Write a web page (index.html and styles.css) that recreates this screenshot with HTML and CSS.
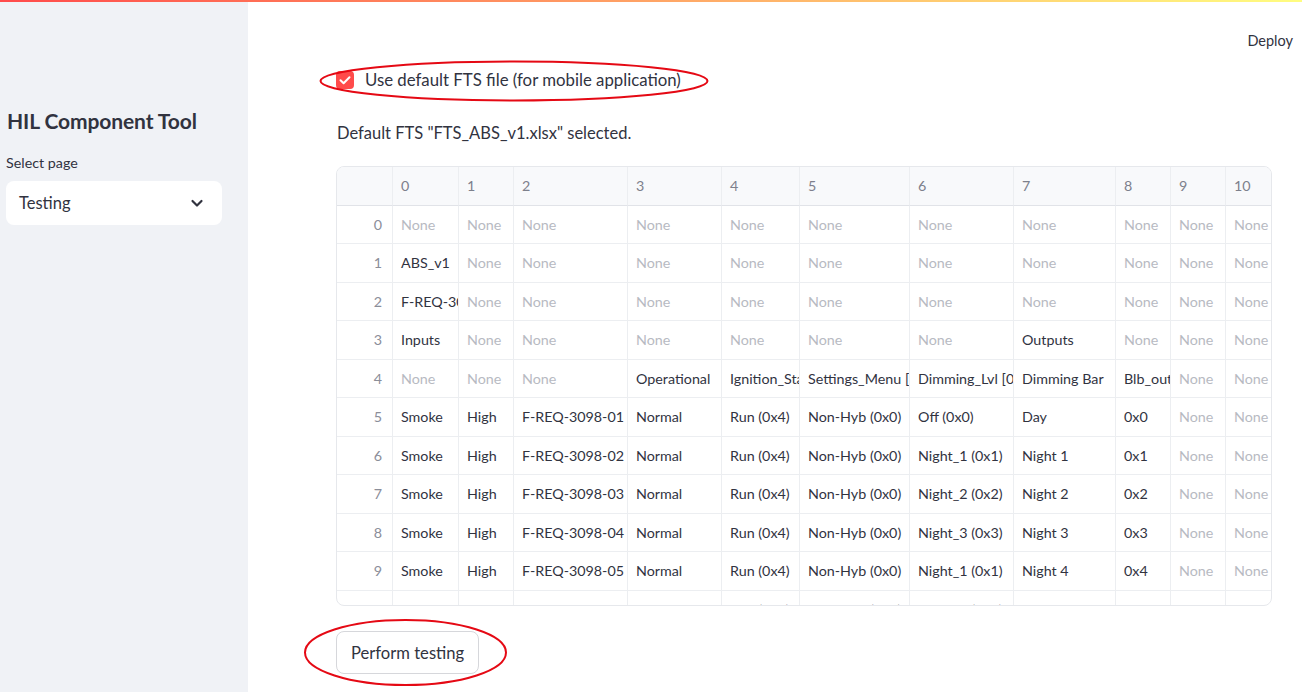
FILE: index.html
```html
<!DOCTYPE html>
<html lang="en">
<head>
<meta charset="utf-8">
<title>HIL Component Tool</title>
<link rel="stylesheet" href="styles.css">
</head>
<body>
<div class="deco"></div>
<div class="app">
  <aside class="sidebar">
    <h1 class="side-title">HIL Component Tool</h1>
    <div class="side-label">Select page</div>
    <div class="select">
      <span>Testing</span>
      <svg class="chev" width="20" height="20" viewBox="0 0 20 20"><path d="M5.5 8 L10 12.5 L14.5 8" fill="none" stroke="#31333f" stroke-width="2.2" stroke-linecap="round" stroke-linejoin="round"/></svg>
    </div>
  </aside>
  <main class="main">
    <div class="toolbar"><span class="deploy">Deploy</span></div>
    <div class="check-row">
      <span class="checkbox"><svg width="18" height="18" viewBox="0 0 18 18"><path d="M4.5 9.2 L7.6 12.2 L13.5 6.2" fill="none" stroke="#fff" stroke-width="2" stroke-linecap="round" stroke-linejoin="round"/></svg></span>
      <span class="check-label">Use default FTS file (for mobile application)</span>
      <svg class="ring ring-check" width="390" height="44" viewBox="0 0 390 44"><ellipse cx="195" cy="22" rx="193.5" ry="19.5" fill="none" stroke="#e50914" stroke-width="2"/></svg>
    </div>
    <p class="info">Default FTS "FTS_ABS_v1.xlsx" selected.</p>
    <div class="grid-wrap">
      <table class="grid">
        <colgroup>
          <col class="w-idx"><col class="w66"><col class="w55"><col class="w114"><col class="w94"><col class="w78"><col class="w110"><col class="w104"><col class="w102"><col class="w55"><col class="w55"><col class="w60">
        </colgroup>
        <thead>
          <tr><th class="idx"></th><th>0</th><th>1</th><th>2</th><th>3</th><th>4</th><th>5</th><th>6</th><th>7</th><th>8</th><th>9</th><th>10</th></tr>
        </thead>
        <tbody>
          <tr><td class="idx">0</td><td class="n">None</td><td class="n">None</td><td class="n">None</td><td class="n">None</td><td class="n">None</td><td class="n">None</td><td class="n">None</td><td class="n">None</td><td class="n">None</td><td class="n">None</td><td class="n">None</td></tr>
          <tr><td class="idx">1</td><td>ABS_v1</td><td class="n">None</td><td class="n">None</td><td class="n">None</td><td class="n">None</td><td class="n">None</td><td class="n">None</td><td class="n">None</td><td class="n">None</td><td class="n">None</td><td class="n">None</td></tr>
          <tr><td class="idx">2</td><td>F-REQ-3098</td><td class="n">None</td><td class="n">None</td><td class="n">None</td><td class="n">None</td><td class="n">None</td><td class="n">None</td><td class="n">None</td><td class="n">None</td><td class="n">None</td><td class="n">None</td></tr>
          <tr><td class="idx">3</td><td>Inputs</td><td class="n">None</td><td class="n">None</td><td class="n">None</td><td class="n">None</td><td class="n">None</td><td class="n">None</td><td>Outputs</td><td class="n">None</td><td class="n">None</td><td class="n">None</td></tr>
          <tr><td class="idx">4</td><td class="n">None</td><td class="n">None</td><td class="n">None</td><td>Operational</td><td>Ignition_Status [0x]</td><td>Settings_Menu [Hyb]</td><td>Dimming_Lvl [0x]</td><td>Dimming Bar</td><td>Blb_output</td><td class="n">None</td><td class="n">None</td></tr>
          <tr><td class="idx">5</td><td>Smoke</td><td>High</td><td>F-REQ-3098-01</td><td>Normal</td><td>Run (0x4)</td><td>Non-Hyb (0x0)</td><td>Off (0x0)</td><td>Day</td><td>0x0</td><td class="n">None</td><td class="n">None</td></tr>
          <tr><td class="idx">6</td><td>Smoke</td><td>High</td><td>F-REQ-3098-02</td><td>Normal</td><td>Run (0x4)</td><td>Non-Hyb (0x0)</td><td>Night_1 (0x1)</td><td>Night 1</td><td>0x1</td><td class="n">None</td><td class="n">None</td></tr>
          <tr><td class="idx">7</td><td>Smoke</td><td>High</td><td>F-REQ-3098-03</td><td>Normal</td><td>Run (0x4)</td><td>Non-Hyb (0x0)</td><td>Night_2 (0x2)</td><td>Night 2</td><td>0x2</td><td class="n">None</td><td class="n">None</td></tr>
          <tr><td class="idx">8</td><td>Smoke</td><td>High</td><td>F-REQ-3098-04</td><td>Normal</td><td>Run (0x4)</td><td>Non-Hyb (0x0)</td><td>Night_3 (0x3)</td><td>Night 3</td><td>0x3</td><td class="n">None</td><td class="n">None</td></tr>
          <tr><td class="idx">9</td><td>Smoke</td><td>High</td><td>F-REQ-3098-05</td><td>Normal</td><td>Run (0x4)</td><td>Non-Hyb (0x0)</td><td>Night_1 (0x1)</td><td>Night 4</td><td>0x4</td><td class="n">None</td><td class="n">None</td></tr>
          <tr><td class="idx">10</td><td>Smoke</td><td>High</td><td>F-REQ-3098-06</td><td>Normal</td><td>Run (0x4)</td><td>Non-Hyb (0x0)</td><td>Night_2 (0x2)</td><td>Night 5</td><td>0x5</td><td class="n">None</td><td class="n">None</td></tr>
        </tbody>
      </table>
    </div>
    <div class="btn-row">
      <button class="btn" type="button">Perform testing</button>
      <svg class="ring ring-btn" width="205" height="69" viewBox="0 0 205 69"><ellipse cx="102.5" cy="34.5" rx="100.5" ry="32.5" fill="none" stroke="#e50914" stroke-width="2"/></svg>
    </div>
  </main>
</div>
</body>
</html>
```
FILE: styles.css
```css
* { box-sizing: border-box; }
html, body { margin: 0; padding: 0; }
body {
  width: 1302px;
  height: 692px;
  overflow: hidden;
  font-family: Lato, "Open Sans", sans-serif;
  color: #31333f;
  background: #ffffff;
  display: flex;
  flex-direction: column;
}
.deco {
  height: 2px;
  flex: 0 0 2px;
  background: linear-gradient(90deg, #ff4b4b, #fffd80);
}
.app {
  flex: 1;
  display: flex;
  min-height: 0;
}
.sidebar {
  width: 248px;
  flex: 0 0 248px;
  background: #f0f2f6;
  padding: 104px 26px 0 6px;
}
.side-title {
  margin: 0 0 0 1px;
  font-size: 21px;
  line-height: 30px;
  font-weight: 700;
  letter-spacing: -0.1px;
}
.side-label {
  margin-top: 17px;
  font-size: 14.3px;
  line-height: 20px;
}
.select {
  margin-top: 8px;
  height: 44px;
  background: #fff;
  border-radius: 8px;
  padding: 0 15px 0 13px;
  display: flex;
  align-items: center;
  justify-content: space-between;
  font-size: 16.5px;
}
.chev { display: block; }
.main {
  flex: 1;
  min-width: 0;
  padding: 0 30px 0 88px;
}
.toolbar {
  display: flex;
  justify-content: flex-end;
  margin-right: -21px;
  padding-top: 29px;
  height: 49px;
}
.deploy {
  font-size: 14.5px;
  line-height: 20px;
}
.check-row {
  position: relative;
  margin-top: 17px;
  height: 24px;
  display: flex;
  align-items: center;
  gap: 11px;
}
.checkbox {
  width: 18px;
  height: 18px;
  border-radius: 4px;
  background: #ff4b4b;
  display: flex;
}
.check-label {
  font-size: 16.8px;
  line-height: 24px;
}
.ring {
  position: absolute;
  pointer-events: none;
}
.ring-check { left: -17px; top: -9px; }
.info {
  margin: 28px 0 0 1px;
  font-size: 16.5px;
  line-height: 26px;
}
.grid-wrap {
  margin-top: 20px;
  width: 936px;
  height: 440px;
  border: 1px solid #e6e8ec;
  border-radius: 8px;
  overflow: hidden;
}
.grid {
  border-collapse: separate;
  border-spacing: 0;
  table-layout: fixed;
  width: 948px;
  font-size: 14.3px;
}
.w-idx { width: 56px; }
.w66 { width: 66px; }
.w55 { width: 55px; }
.w114 { width: 114px; }
.w94 { width: 94px; }
.w78 { width: 78px; }
.w110 { width: 110px; }
.w104 { width: 104px; }
.w102 { width: 102px; }
.w60 { width: 60px; }
.grid th, .grid td {
  height: 38.5px;
  padding: 0 8px;
  border-right: 1px solid #eceef1;
  border-bottom: 1px solid #eceef1;
  white-space: nowrap;
  overflow: hidden;
  text-overflow: clip;
  text-align: left;
  vertical-align: middle;
  font-weight: 400;
}
.grid th {
  background: #f8f9fb;
  color: #7d808c;
  border-bottom-color: #e1e3e8;
}
.grid .idx {
  text-align: right;
  color: #8b8e99;
  padding-right: 10px;
}
.grid .n { color: #b7bac2; }
.btn-row {
  position: relative;
  margin-top: 25px;
}
.btn {
  height: 43px;
  padding: 0 14px;
  border: 1px solid #d6d7db;
  border-radius: 8px;
  background: #fff;
  font-family: Lato, "Open Sans", sans-serif;
  font-size: 16.6px;
  color: #31333f;
}
.ring-btn { left: -33px; top: -13px; }
```
